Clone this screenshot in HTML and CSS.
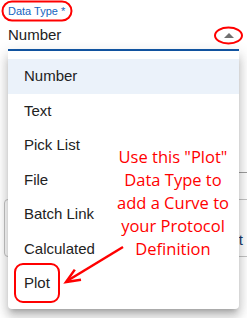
FILE: index.html
```html
<!DOCTYPE html>
<html lang="en">
<head>
  <meta charset="UTF-8" />
  <title>Data Type</title>
  <link rel="stylesheet" href="styles.css">
</head>
<body>
  <div class="field">
    <label class="field-label">Data Type *</label>
    <div class="select">
      <span class="select-value">Number</span>
      <span class="caret"></span>
    </div>
  </div>

  <div class="behind">
    <div class="behind-box">Text</div>
  </div>

  <ul class="menu">
    <li class="menu-item active">Number</li>
    <li class="menu-item">Text</li>
    <li class="menu-item">Pick List</li>
    <li class="menu-item">File</li>
    <li class="menu-item">Batch Link</li>
    <li class="menu-item">Calculated</li>
    <li class="menu-item">Plot</li>
  </ul>

  <div class="note">Use this "Plot"<br>Data Type to<br>add a Curve to<br>your Protocol<br>Definition</div>

  <svg class="marks" width="247" height="318" viewBox="0 0 247 318">
    <rect x="2.5" y="1.5" width="69" height="19" rx="9.5" />
    <ellipse cx="228.5" cy="35.5" rx="13.5" ry="8" />
    <rect x="15" y="264" width="44" height="38" rx="8" />
    <line x1="123" y1="247" x2="67" y2="281" />
    <polyline points="74.8,269.6 66,282 81,279.8" />
  </svg>
</body>
</html>
```

FILE: styles.css
```css
* {
  box-sizing: border-box;
}

body {
  margin: 0;
  width: 247px;
  height: 318px;
  overflow: hidden;
  position: relative;
  background: #fff;
  font-family: "Liberation Sans", Arial, sans-serif;
  color: #222;
}

.field {
  margin-left: 8px;
  width: 231px;
  padding-top: 5px;
}

.field-label {
  display: block;
  font-size: 11px;
  line-height: 13px;
  color: #1565c0;
}

.select {
  display: flex;
  justify-content: space-between;
  align-items: center;
  padding: 6px 0 3px;
  line-height: 22px;
  font-size: 15px;
  border-bottom: 2px solid #1258a8;
}

.caret {
  width: 0;
  height: 0;
  margin-right: 5px;
  border-left: 5px solid transparent;
  border-right: 5px solid transparent;
  border-bottom: 5px solid #707070;
}

.behind {
  margin-top: 121px;
  margin-left: 100px;
  border-top: 1px solid #9e9e9e;
  padding-top: 26px;
}

.behind-box {
  margin-left: -96px;
  width: 253px;
  height: 58px;
  border: 1px solid #c4c4c4;
  border-radius: 4px;
  padding: 31px 13px 0 0;
  text-align: right;
  font-size: 15px;
  line-height: 18px;
  color: #1a3a6b;
}

.menu {
  position: absolute;
  top: 51px;
  left: 8px;
  width: 231px;
  margin: 0;
  padding: 8px 0;
  list-style: none;
  background: #fff;
  border-radius: 0 0 4px 4px;
  box-shadow: 0 5px 5px -3px rgba(0, 0, 0, 0.2), 0 8px 10px 1px rgba(0, 0, 0, 0.14), 0 3px 14px 2px rgba(0, 0, 0, 0.12);
}

.menu-item {
  padding: 6px 16px;
  font-size: 15px;
  line-height: 22.5px;
  color: #222;
}

.menu-item.active {
  background: #ebf2fa;
}

.note {
  position: absolute;
  top: 145px;
  left: 113px;
  width: 120px;
  text-align: center;
  font-family: "Open Sans", sans-serif;
  font-size: 16.5px;
  line-height: 23px;
  color: #ff0000;
}

.marks {
  position: absolute;
  top: 0;
  left: 0;
  fill: none;
  stroke: #ff0000;
  stroke-width: 2;
}

.marks line,
.marks polyline {
  stroke-width: 2.5;
}
```
